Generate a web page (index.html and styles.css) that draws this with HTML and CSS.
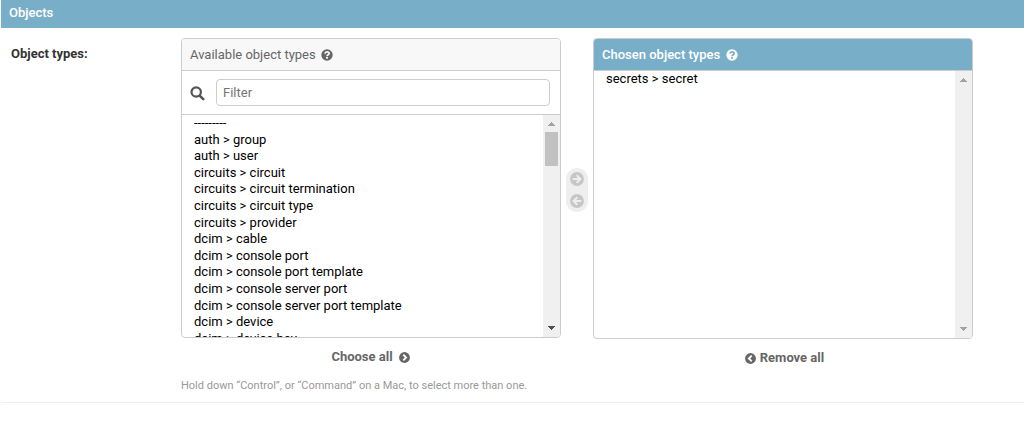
FILE: index.html
```html
<!DOCTYPE html>
<html lang="en">
<head>
<meta charset="utf-8">
<title>Objects</title>
<link rel="stylesheet" href="styles.css">
</head>
<body>
<fieldset class="module">
  <h2 class="module-title">Objects</h2>
  <div class="form-row">
    <label class="row-label">Object types:</label>
    <div class="field">
      <div class="selector">
        <div class="column">
          <div class="panel available">
            <h3 class="panel-title"><span>Available object types</span>
              <svg class="help" viewBox="0 0 12 12"><circle cx="6" cy="6" r="5.7" fill="#666"/><path d="M3.900 4.600C4.100 3.300 5 2.800 6 2.800s2.100.6 2.100 1.700C8.100 5.800 6.100 5.700 6.100 7.200" fill="none" stroke="#f8f8f8" stroke-width="1.800"/><rect x="5.100" y="8" width="1.900" height="1.700" fill="#f8f8f8"/></svg>
            </h3>
            <div class="filter">
              <svg class="search" viewBox="0 0 15 15"><circle cx="6.200" cy="6" r="4.700" fill="none" stroke="#555" stroke-width="2.200"/><path d="M9.700 9.700L13.200 13.200" stroke="#555" stroke-width="2.600" stroke-linecap="round"/></svg>
              <input class="filter-input" type="text" placeholder="Filter">
            </div>
            <div class="listbox">
              <ul class="options">
                <li class="dashes">---------</li>
                <li>auth &gt; group</li>
                <li>auth &gt; user</li>
                <li>circuits &gt; circuit</li>
                <li>circuits &gt; circuit termination</li>
                <li>circuits &gt; circuit type</li>
                <li>circuits &gt; provider</li>
                <li>dcim &gt; cable</li>
                <li>dcim &gt; console port</li>
                <li>dcim &gt; console port template</li>
                <li>dcim &gt; console server port</li>
                <li>dcim &gt; console server port template</li>
                <li>dcim &gt; device</li>
                <li>dcim &gt; device bay</li>
              </ul>
              <div class="scrollbar">
                <svg class="arrow" viewBox="0 0 17 17" shape-rendering="crispEdges"><path d="M8 7h1v1h1v1h1v1h1v1H5v-1h1V9h1V8h1z" fill="#a3a3a3"/></svg>
                <div class="thumb"></div>
                <svg class="arrow down" viewBox="0 0 17 17" shape-rendering="crispEdges"><path d="M5 6h7v1h-1v1h-1v1H9v1H8V9H7V8H6V7H5z" fill="#505050"/></svg>
              </div>
            </div>
          </div>
          <a class="bulk">Choose all
            <svg class="bulk-icon" viewBox="0 0 11 11"><circle cx="5.500" cy="5.500" r="5.400" fill="#666"/><path d="M4.300 2.700L7.100 5.500L4.300 8.300" fill="none" stroke="#fff" stroke-width="1.900"/></svg>
          </a>
        </div>
        <div class="chooser">
          <svg class="move" viewBox="0 0 14 14"><circle cx="7" cy="7" r="6.900" fill="#c6c6c6"/><path d="M2.600 7H10.300M6.700 3.200L10.500 7L6.700 10.800" fill="none" stroke="#eee" stroke-width="2"/></svg>
          <svg class="move" viewBox="0 0 14 14"><circle cx="7" cy="7" r="6.900" fill="#c6c6c6"/><path d="M11.400 7H3.700M7.300 3.200L3.500 7L7.300 10.800" fill="none" stroke="#eee" stroke-width="2"/></svg>
        </div>
        <div class="column">
          <div class="panel chosen">
            <h3 class="panel-title"><span>Chosen object types</span>
              <svg class="help" viewBox="0 0 12 12"><circle cx="6" cy="6" r="5.700" fill="#fff"/><path d="M3.900 4.600C4.100 3.300 5 2.800 6 2.800s2.100.6 2.100 1.700C8.100 5.800 6.100 5.700 6.100 7.200" fill="none" stroke="#79aec8" stroke-width="1.800"/><rect x="5.100" y="8" width="1.900" height="1.700" fill="#79aec8"/></svg>
            </h3>
            <div class="listbox">
              <ul class="options"><li>secrets &gt; secret</li></ul>
              <div class="scrollbar">
                <svg class="arrow" viewBox="0 0 17 17" shape-rendering="crispEdges"><path d="M8 7h1v1h1v1h1v1h1v1H5v-1h1V9h1V8h1z" fill="#a3a3a3"/></svg>
                <svg class="arrow down" viewBox="0 0 17 17" shape-rendering="crispEdges"><path d="M5 6h7v1h-1v1h-1v1H9v1H8V9H7V8H6V7H5z" fill="#a3a3a3"/></svg>
              </div>
            </div>
          </div>
          <a class="bulk remove">
            <svg class="bulk-icon" viewBox="0 0 11 11"><circle cx="5.500" cy="5.500" r="5.400" fill="#666"/><path d="M6.700 2.700L3.900 5.500L6.700 8.300" fill="none" stroke="#fff" stroke-width="1.900"/></svg>
            Remove all</a>
        </div>
      </div>
      <p class="help-text">Hold down “Control”, or “Command” on a Mac, to select more than one.</p>
    </div>
  </div>
</fieldset>
</body>
</html>
```

FILE: styles.css
```css
* { box-sizing: border-box; }
body {
  margin: 0;
  background: #fff;
  color: #333;
  font-family: Roboto, "Liberation Sans", sans-serif;
  font-size: 13px;
  overflow: hidden;
}
h2, h3, p, ul { margin: 0; padding: 0; }
svg { display: block; flex: none; }
.module { margin: 0 0 0 1px; padding: 0; border: 0; min-width: 0; }
.module-title {
  height: 28px;
  padding-left: 8px;
  background: #79aec8;
  color: #fff;
  font-size: 13px;
  font-weight: 500;
  line-height: 26px;
}
.form-row {
  display: flex;
  height: 375px;
  padding: 10px 10px 0;
  border-bottom: 1px solid #eee;
}
.row-label { width: 170px; flex: none; font-weight: 700; line-height: 31px; }
.selector { display: flex; height: 329px; }
.column { width: 380px; }
.panel {
  display: flex;
  flex-direction: column;
  height: 300px;
  border: 1px solid #ccc;
  border-radius: 4px;
  overflow: hidden;
}
.chosen { height: 301px; }
.panel-title {
  display: flex;
  align-items: center;
  gap: 5.500px;
  height: 32px;
  flex: none;
  padding-left: 8px;
  border-bottom: 1px solid #ccc;
  background: #f8f8f8;
  color: #666;
  font-size: 13px;
  font-weight: 400;
}
.chosen .panel-title { background: #79aec8; color: #fff; font-weight: 500; }
.help { width: 12px; height: 12px; }
.filter {
  display: flex;
  align-items: center;
  height: 44px;
  flex: none;
  padding: 0 10px 0 8px;
  border-bottom: 1px solid #ccc;
}
.search { width: 15px; height: 15px; margin: 2px 11px 0 0; }
.filter-input {
  flex: 1;
  height: 27px;
  min-width: 0;
  padding: 0 6px;
  border: 1px solid #ccc;
  border-radius: 4px;
  font: inherit;
}
.filter-input::placeholder { color: #757575; }
.listbox { display: flex; flex: 1; min-height: 0; overflow: hidden; }
.options {
  flex: 1;
  padding-left: 12px;
  list-style: none;
  color: #000;
  line-height: 16.6px;
}
.scrollbar { display: flex; flex-direction: column; width: 17px; background: #f0f0f0; }
.arrow { width: 17px; height: 17px; }
.down { margin-top: auto; }
.thumb { width: 13px; height: 34px; margin-left: 2px; background: #c1c1c1; }
.chooser {
  display: flex;
  flex-direction: column;
  align-items: center;
  gap: 8px;
  width: 22px;
  height: 44px;
  margin: 130px 5px 0;
  padding-top: 4px;
  border-radius: 11px;
  background: #eee;
}
.move { width: 14px; height: 14px; }
.bulk {
  display: flex;
  align-items: center;
  justify-content: center;
  gap: 6px;
  height: 16px;
  margin-top: 10px;
  padding-right: 1px;
  color: #666;
  font-weight: 700;
}
.bulk-icon { width: 11px; height: 11px; margin-top: 3px; }
.remove { gap: 4px; padding: 0 0 0 3px; }
.help-text { margin-top: 11px; color: #999; font-size: 11px; line-height: 16px; }
```
